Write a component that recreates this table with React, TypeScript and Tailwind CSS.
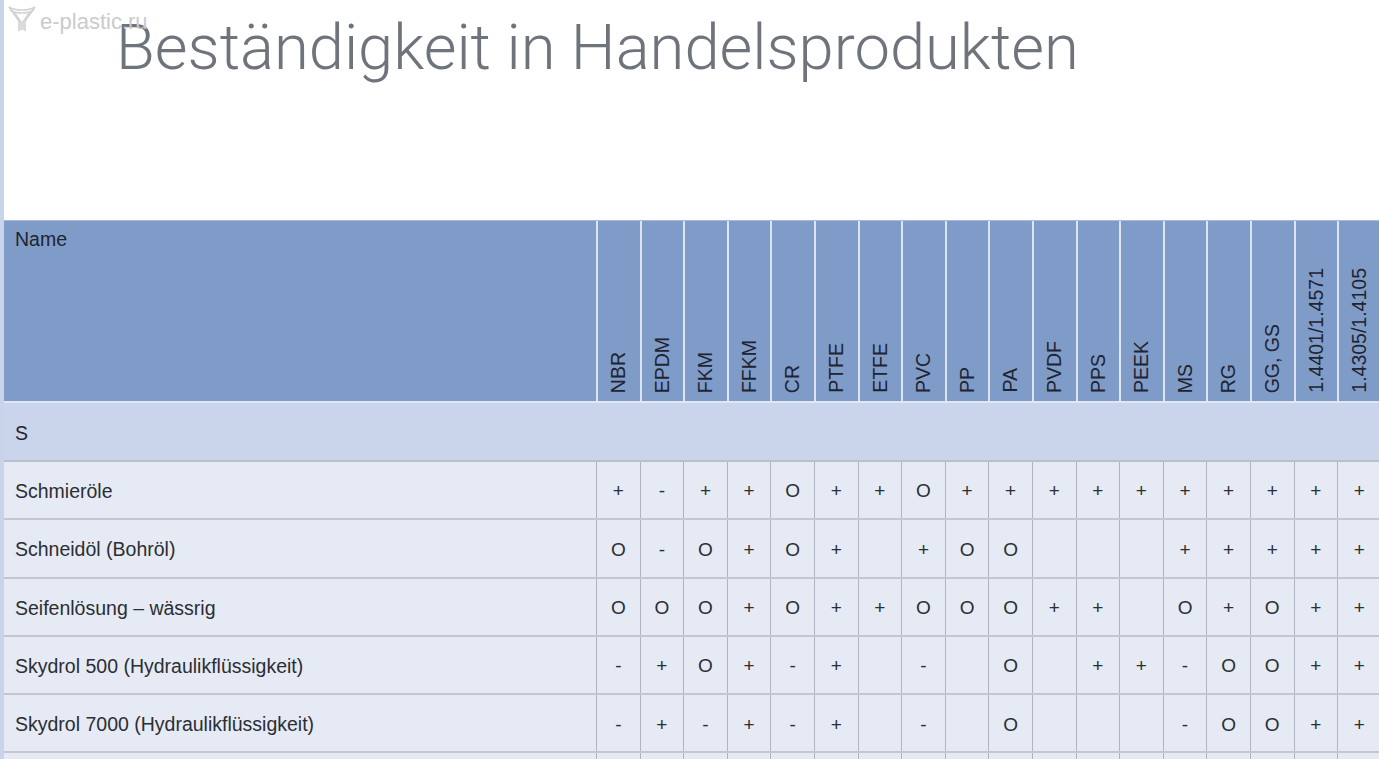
import React from "react";

// ── Data ────────────────────────────────────────────────────────────────
const materials = [
  "NBR", "EPDM", "FKM", "FFKM", "CR", "PTFE", "ETFE", "PVC", "PP",
  "PA", "PVDF", "PPS", "PEEK", "MS", "RG", "GG, GS", "1.4401/1.4571", "1.4305/1.4105",
];

// one string per row, one char per material; "_" = empty cell
const rows: { name: string; values: string }[] = [
  { name: "Schmieröle", values: "+-++O++O++++++++++" },
  { name: "Schneidöl (Bohröl)", values: "O-O+O+_+OO___+++++" },
  { name: "Seifenlösung – wässrig", values: "OOO+O++OOO++_O+O++" },
  { name: "Skydrol 500 (Hydraulikflüssigkeit)", values: "-+O+-+_-_O_++-OO++" },
  { name: "Skydrol 7000 (Hydraulikflüssigkeit)", values: "-+-+-+_-_O___-OO++" },
  { name: "", values: "__________________" },
];

const font = { fontFamily: '"Liberation Sans", Arial, Helvetica, sans-serif' };

// ── Watermark logo (funnel mark) ─────────────────────────────────────────
function Logo() {
  return (
    <svg width="30" height="30" viewBox="0 0 30 30" fill="none" stroke="#d2d2d2" strokeWidth="1.6">
      <path d="M2 4 C8 8, 22 8, 28 4" />
      <path d="M3 7 C9 11, 21 11, 27 7" />
      <path d="M2 4 L12 18 L12 28" />
      <path d="M28 4 L18 18 L18 28" />
      <path d="M7 9 L14 19 L14 27" />
      <path d="M23 9 L16 19 L16 27" />
    </svg>
  );
}

function Cell({ v }: { v: string }) {
  return (
    <div className="border-l border-[#aeb4c2] flex items-center justify-center text-[#2b2e33] pt-[3px]">
      {v === "_" ? "" : <span className="text-[19px]">{v}</span>}
    </div>
  );
}

export default function App() {
  return (
    <div className="flex h-screen w-full overflow-hidden bg-white" style={font}>
      <div className="w-[4px] shrink-0 bg-[#c9d3ea]" />
      <div className="flex-1 min-w-0 overflow-hidden">
        {/* Title area */}
        <div className="relative h-[220px]">
          <h1
            className="pl-[112px] pt-[12px] text-[63.3px] leading-[70px] font-light text-[#6f747c]"
            style={{ fontFamily: 'Roboto, "Liberation Sans", sans-serif' }}
          >
            Beständigkeit in Handelsprodukten
          </h1>
          <div className="absolute left-[3px] top-[3px] flex items-center gap-[3px]">
            <Logo />
            <span className="text-[22px] text-[#cbcbcb] leading-none mt-[8px]">e-plastic.ru</span>
          </div>
        </div>

        {/* Table */}
        <div className="w-[1380px] text-[19.5px] text-[#1f2430] border-t border-[#a9bbdb]">
          {/* header */}
          <div className="grid grid-cols-[592px_repeat(18,43.6px)] h-[182px] bg-[#7f9cc8] border-b-2 border-[#dfe6f3]">
            <div className="pl-[11px] pt-[6px] leading-[24px]">Name</div>
            {materials.map((m) => (
              <div key={m} className="border-l-2 border-[#dde5f2] flex flex-col justify-end items-center pb-[8px]">
                <span className="[writing-mode:vertical-rl] rotate-180 whitespace-nowrap leading-none">{m}</span>
              </div>
            ))}
          </div>
          {/* section row */}
          <div className="h-[59px] bg-[#cad4eb] border-b-2 border-[#b9bfcc] flex items-center pl-[11px] pt-[4px]">S</div>
          {/* data rows */}
          {rows.map((r, i) => (
            <div
              key={i}
              className="grid grid-cols-[592px_repeat(18,43.6px)] h-[58.3px] bg-[#e6eaf5] border-b-2 border-[#c2c7d3]"
            >
              <div className="flex items-center pl-[11px] pt-[3px] text-[#2b2e33]">{r.name}</div>
              {r.values.split("").map((v, j) => (
                <Cell key={j} v={v} />
              ))}
            </div>
          ))}
        </div>
      </div>
    </div>
  );
}
